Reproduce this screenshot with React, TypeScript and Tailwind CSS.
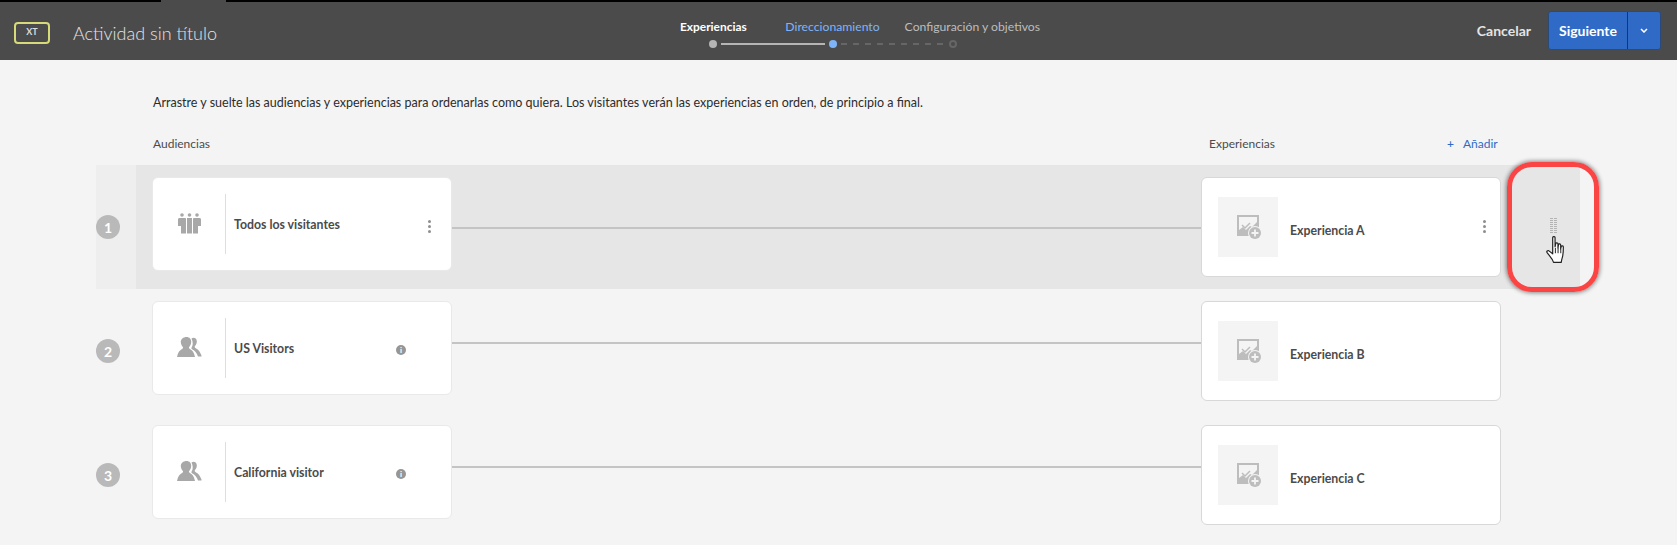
import React from "react";

const font = { fontFamily: '"Lato", "Noto Sans", sans-serif' };

const GroupIcon = () => (
  <svg width="23" height="21" viewBox="0 0 23 21" fill="#a8a8a8">
    <circle cx="4" cy="2" r="1.800" />
    <circle cx="11.500" cy="2" r="1.800" />
    <circle cx="19" cy="2" r="1.800" />
    <path d="M1.500 5h5.200c.8 0 1.300.4 1.300 1v14.500H3V13H0V6.500C0 5.600.6 5 1.500 5z" />
    <path d="M9 5h5v15.500H9z" />
    <path d="M16.300 5h5.200c.9 0 1.500.6 1.500 1.500V13h-3v7.500h-5V6c0-.6.500-1 1.300-1z" />
  </svg>
);

const PeopleIcon = () => (
  <svg width="25" height="20" viewBox="0 0 25 20" fill="#a8a8a8">
    <path d="M14.500 1.500c2-1.600 5-.6 5.300 2.500.2 2-.6 3.800-1.800 5-.5.600-.3 1.500.4 1.900 2 1 4.300 2.600 6.100 7.600v1h-3.500c-1-3.200-3-6-6-7.300-.6-.3-.8-1-.4-1.600 1.500-2.400 1.500-6 -.1-9.100z" />
    <path d="M9.500 0c3 0 5 2.200 4.700 5.300-.2 2-1 3.600-2 4.700-.5.600-.3 1.300.4 1.700 2.500 1.200 4.600 3.600 5.400 8.300H0c.8-4.700 2.900-7.100 5.400-8.300.7-.4.900-1.100.4-1.700-1-1.100-1.800-2.700-2-4.700C3.500 2.200 6.500 0 9.500 0z" />
  </svg>
);

const ImageAddIcon = () => (
  <svg width="25" height="25" viewBox="0 0 25 25">
    <path fill="#bdbdbd" d="M0 0h22v21H0z" />
    <path fill="#f4f4f4" d="M2 2h18v5l-5 5-2-1-4 4-3-3-4 3z" />
    <path fill="none" stroke="#bdbdbd" strokeWidth="1.500" d="M5 10l3 3 5-5" />
    <circle cx="18" cy="18" r="7" fill="#f4f4f4" />
    <circle cx="18" cy="18" r="6" fill="#bdbdbd" />
    <path stroke="#f4f4f4" strokeWidth="1.800" d="M18 14.500v7M14.500 18h7" />
  </svg>
);

const HandCursor = () => (
  <svg width="20" height="26" viewBox="0 0 20 26" className="h-[28px] w-[22px]">
    <path
      fill="#fff"
      stroke="#222"
      strokeWidth="1.100"
      strokeLinejoin="round"
      d="M6 1.500c0-1.300 2.200-1.300 2.200 0V10l.6-3c.3-1 2-.9 2.100.2V11l.5-3c.3-1 1.900-.8 2 .3V12l.6-2.300c.3-1 1.900-.7 1.900.4 0 3-.1 6-.6 8.400-.4 2-1 3-1.400 6H6.800c-.6-2.400-2-4-3.800-6.200L.8 15.500c-.8-1.200.5-2.500 1.700-1.700L6 16.500z"
    />
    <path stroke="#222" strokeWidth="0.900" d="M8.500 11v5M11 11v5M13.500 12v4" />
  </svg>
);

const Kebab = () => (
  <div className="flex flex-col gap-[2px]">
    <span className="h-[3px] w-[3px] rounded-full bg-[#8e8e8e]" />
    <span className="h-[3px] w-[3px] rounded-full bg-[#8e8e8e]" />
    <span className="h-[3px] w-[3px] rounded-full bg-[#8e8e8e]" />
  </div>
);

const InfoDot = () => (
  <span className="flex h-[10px] w-[10px] items-center justify-center rounded-full bg-[#969696] text-[8px] font-bold leading-none text-white">
    i
  </span>
);

interface RowProps {
  index: number;
  audience: string;
  experience: string;
  active?: boolean;
}

const Row: React.FC<RowProps> = ({ index, audience, experience, active }) => {
  return (
    <div className={`flex h-[124px] w-[1484px] ${active ? "bg-[#e6e6e6]" : ""}`}>
      <div className={`flex w-[40px] shrink-0 items-start pt-[50px] ${active ? "bg-[#eeeeee]" : ""}`}>
        <span className="flex h-[24px] w-[24px] items-center justify-center rounded-full bg-[#b9b9b9] text-[14px] font-bold text-white">
          {index}
        </span>
      </div>
      <div className="flex flex-1 items-start pl-[16px] pt-[12px]">
        <div className="flex h-[94px] w-[300px] shrink-0 items-start rounded-[6px] border border-[#e9e9e9] bg-white">
          <div className="ml-[1px] mt-[16px] flex h-[60px] w-[72px] shrink-0 items-center justify-center border-r border-[#dedede] pb-[2px] pr-[1px]">
            {active ? <GroupIcon /> : <PeopleIcon />}
          </div>
          <span className="ml-[8px] mt-[37px] w-[180px] text-[12.300px] font-bold leading-[20px] text-[#4b4b4b]">
            {audience}
          </span>
          {active ? (
            <div className="-ml-[6px] mt-[42px] translate-x-[20px]"><Kebab /></div>
          ) : (
            <div className="-ml-[18px] mt-[43px]"><InfoDot /></div>
          )}
        </div>
        <div className={`h-[2px] flex-1 bg-[#c4c4c4] ${active ? "mt-[50px]" : "mt-[41px]"}`} />
        <div className="flex h-[100px] w-[300px] shrink-0 items-center rounded-[6px] border border-[#d8d8d8] bg-white pl-[16px]">
          <div className="flex h-[60px] w-[60px] shrink-0 items-center justify-center bg-[#f4f4f4] pl-[2px]">
            <ImageAddIcon />
          </div>
          <span className="ml-[12px] mt-[8px] w-[190px] text-[12.300px] font-bold text-[#4b4b4b]">{experience}</span>
          {active && <div className="-mt-[1px] ml-[3px]"><Kebab /></div>}
        </div>
        <div className="relative h-full w-[79px] shrink-0">
          {active && (
            <div className="ml-[49px] mt-[41px] flex w-[7px] flex-wrap gap-x-[1px] gap-y-[1px]">
              {Array.from({ length: 16 }).map((_, i) => (
                <span key={i} className="h-[1px] w-[3px] bg-[#b4b4b4]" />
              ))}
            </div>
          )}
          {active && (
            <div className="absolute left-[45px] top-[59px]">
              <HandCursor />
            </div>
          )}
        </div>
      </div>
    </div>
  );
};

const App: React.FC = () => {
  return (
    <div className="relative h-[545px] w-[1677px] overflow-hidden bg-[#f4f4f4]" style={font}>
      <div className="flex h-[2px] bg-black">
        <div className="ml-[161px] h-full w-[65px] bg-[#4b4b4b]" />
      </div>
      <header className="flex h-[58px] items-start bg-[#4b4b4b]">
        <div className="flex w-[680px] shrink-0 items-center pl-[14px] pt-[18px]">
          <span className="flex h-[22px] w-[36px] items-center justify-center rounded-[4px] border-2 border-[#d6da78] pb-[1px] text-[9px] font-bold text-[#dcdcdc]">
            XT
          </span>
          <span className="ml-[23px] mt-[1px] text-[18px] font-light leading-[24px] text-[#e4e4e4]">Actividad sin título</span>
        </div>
        <div className="w-[360px] shrink-0 pt-[15px]">
          <div className="flex whitespace-nowrap text-[12.200px] leading-[20px]">
            <span className="w-[106px] text-[11.900px] font-bold text-white">Experiencias</span>
            <span className="w-[120px] text-[#7eb4fa]">Direccionamiento</span>
            <span className="text-[#bdbdbd]">Configuración y objetivos</span>
          </div>
          <div className="ml-[29px] mt-[3px] flex items-center">
            <span className="h-[8px] w-[8px] rounded-full bg-[#b5b5b5]" />
            <span className="mx-[4px] h-[2px] w-[104px] bg-[#b5b5b5]" />
            <span className="h-[8px] w-[8px] rounded-full bg-[#7eb4fa]" />
            <span className="mx-[4px] flex w-[104px] gap-[6px]">
              {Array.from({ length: 9 }).map((_, i) => (
                <span key={i} className="h-[2px] w-[6px] bg-[#666666]" />
              ))}
            </span>
            <span className="h-[8px] w-[8px] rounded-full border-2 border-[#666666]" />
          </div>
        </div>
        <div className="flex flex-1 items-center justify-end pr-[16px] pt-[9px]">
          <span className="text-[14px] font-bold text-[#e4e4e4]">Cancelar</span>
          <div className="ml-[17px] flex h-[39px] w-[113px] overflow-hidden rounded-[3px] border border-[#2c4a78] bg-[#2f6bc6] text-white">
            <span className="flex w-[79px] items-center justify-center border-r border-[#27344a] text-[14px] font-bold">
              Siguiente
            </span>
            <span className="flex flex-1 items-center justify-center">
              <svg width="8" height="5" viewBox="0 0 8 5" fill="none" stroke="#fff" strokeWidth="1.500">
                <path d="M1 1l3 3 3-3" />
              </svg>
            </span>
          </div>
        </div>
      </header>
      <main className="pl-[96px]">
        <p className="pl-[57px] pt-[34px] text-[12.500px] leading-[18px] text-[#2c2c2c]">
          Arrastre y suelte las audiencias y experiencias para ordenarlas como quiera. Los visitantes verán las
          experiencias en orden, de principio a final.
        </p>
        <div className="flex h-[53px] w-[1484px] items-start pl-[57px] pt-[23px] text-[12px] leading-[18px] text-[#4b4b4b]">
          <span className="w-[1056px]">Audiencias</span>
          <span className="w-[238px]">Experiencias</span>
          <span className="font-medium text-[#2f6bc6]">+</span>
          <span className="ml-[9px] text-[#2f6bc6]">Añadir</span>
        </div>
        <Row index={1} audience="Todos los visitantes" experience="Experiencia A" active />
        <Row index={2} audience="US Visitors" experience="Experiencia B" />
        <Row index={3} audience="California visitor" experience="Experiencia C" />
      </main>
      <div className="absolute left-[1507px] top-[162px] h-[130px] w-[92px] rounded-[25px] border-[5px] border-[#fb4444] shadow-[0_0_4px_1px_rgba(0,0,0,0.45)]" />
    </div>
  );
};

export default App;
